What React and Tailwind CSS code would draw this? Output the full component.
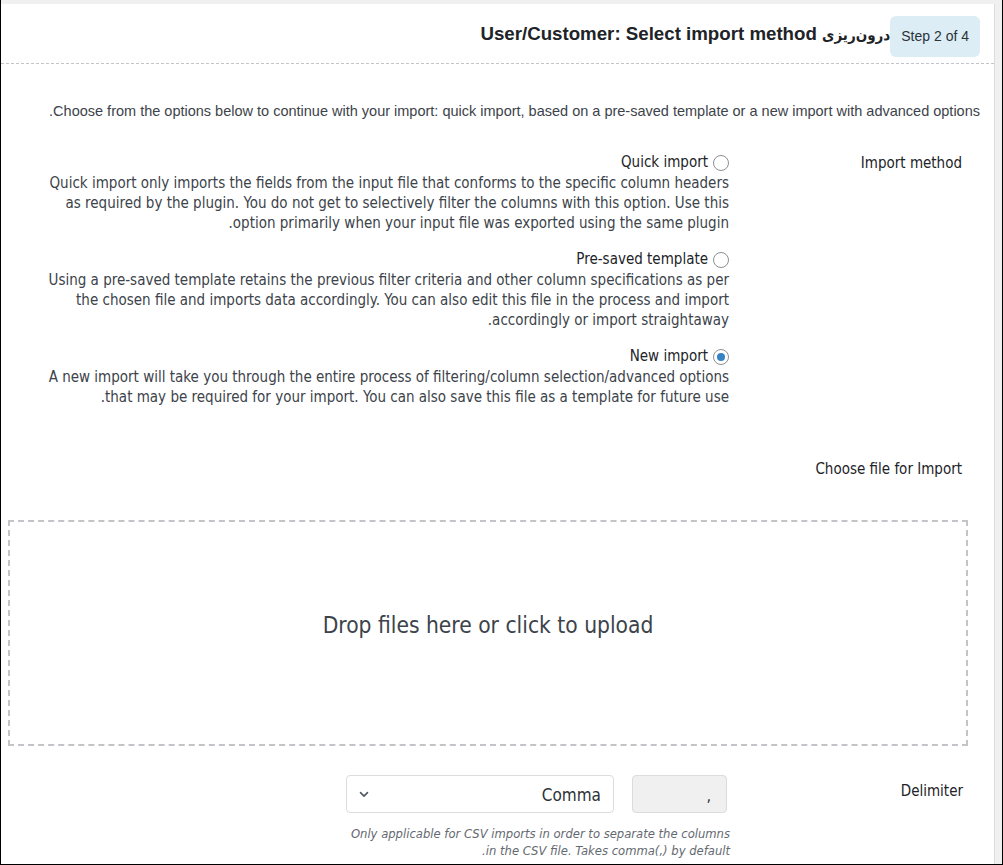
import React from "react";

function Radio({ checked }) {
  return (
    <span className="inline-flex w-[16px] h-[16px] rounded-full border border-[#8c8f94] bg-white items-center justify-center shrink-0">
      {checked ? <span className="w-[8px] h-[8px] rounded-full bg-[#3582c4]" /> : null}
    </span>
  );
}

function Option({ label, checked, lines, className }) {
  return (
    <div className={className}>
      <div className="flex items-center gap-[5px] h-[21px] text-[15px] text-[#1d2327]">
        <Radio checked={checked} />
        <span>{label}</span>
      </div>
      <div className="text-[15px] leading-[20px] text-[#3c434a]">
        {lines.map((l, i) => (
          <div key={i} className="whitespace-nowrap">{l}</div>
        ))}
      </div>
    </div>
  );
}

export default function App() {
  return (
    <div className="w-[1003px] h-[865px] bg-[#f0f0f1] border-l border-r border-b border-black pt-[4px] overflow-hidden flex">
      <div
        dir="rtl"
        className="w-[994px] h-full bg-white border-r border-[#dcdcde] font-['DejaVu_Sans_Condensed','DejaVu_Sans',sans-serif] text-[#3c434a]"
      >
        {/* header */}
        <div className="flex items-start h-[60px] border-b border-dashed border-[#c3c4c7] pr-[14px] pt-[12px]">
          <div className="h-[41px] px-[11px] rounded-[6px] bg-[#dcedf5] flex items-center text-[14px] text-[#2c3338] font-['Liberation_Sans_Narrow','Liberation_Sans',sans-serif]">
            Step 2 of 4
          </div>
          <div className="mt-[4px] text-[18.7px] font-bold text-[#1d2327] font-['Liberation_Sans_Narrow','Liberation_Sans','DejaVu_Sans',sans-serif] whitespace-nowrap">
            <span className="text-[15px] font-['DejaVu_Sans_Condensed','DejaVu_Sans',sans-serif]">درون‌ریزی</span> User/Customer: Select import method
          </div>
        </div>

        {/* intro */}
        <div className="mt-[38px] pr-[14px] text-[14.5px] leading-[18px] text-[#3c434a] whitespace-nowrap font-['Liberation_Sans_Narrow','Liberation_Sans',sans-serif]">
          Choose from the options below to continue with your import: quick import, based on a pre-saved template or a new import with advanced options.
        </div>

        {/* import method row */}
        <div className="flex mt-[32px] pr-[32px]">
          <div className="w-[233px] shrink-0 pt-[1px] text-[15px] leading-[21px] text-[#1d2327]">Import method</div>
          <div className="w-[690px] shrink-0">
            <Option
              label="Quick import"
              lines={[
                "Quick import only imports the fields from the input file that conforms to the specific column headers",
                "as required by the plugin. You do not get to selectively filter the columns with this option. Use this",
                "option primarily when your input file was exported using the same plugin.",
              ]}
            />
            <Option
              className="mt-[16px]"
              label="Pre-saved template"
              lines={[
                "Using a pre-saved template retains the previous filter criteria and other column specifications as per",
                "the chosen file and imports data accordingly. You can also edit this file in the process and import",
                "accordingly or import straightaway.",
              ]}
            />
            <Option
              className="mt-[16px]"
              checked
              label="New import"
              lines={[
                "A new import will take you through the entire process of filtering/column selection/advanced options",
                "that may be required for your import. You can also save this file as a template for future use.",
              ]}
            />
          </div>
        </div>

        {/* choose file */}
        <div className="mt-[52px] pr-[32px] text-[15px] leading-[20px] text-[#1d2327]">Choose file for Import</div>

        <div className="mt-[41px] mr-[26px] w-[960px] h-[226px] border-2 border-dashed border-[#c3c4c7] flex items-center justify-center pb-[15px]">
          <span className="text-[22.6px] text-[#3c434a]">Drop files here or click to upload</span>
        </div>

        {/* delimiter */}
        <div className="flex mt-[29px] pr-[31px]">
          <div className="w-[236px] shrink-0 pt-[6px] text-[15px] leading-[21px] text-[#1d2327]">Delimiter</div>
          <div className="shrink-0">
            <div className="flex gap-[18px]">
              <div className="w-[95px] h-[38px] rounded-[4px] border border-[#dcdcde] bg-[#f0f0f1] flex items-center pr-[15px] pt-[4px] text-[16px] text-[#2c3338]">,</div>
              <div className="w-[268px] h-[38px] rounded-[4px] border border-[#dcdcde] bg-white flex items-center justify-between pr-[12px] pl-[10px] pt-[3px] text-[17px] text-[#2c3338]">
                <span>Comma</span>
                <svg className="-mt-[3px]" width="14" height="14" viewBox="0 0 20 20" fill="none" stroke="#50575e" strokeWidth="2.2" strokeLinecap="round" strokeLinejoin="round">
                  <path d="M5 8l5 5 5-5" />
                </svg>
              </div>
            </div>
            <div className="mt-[12px] mr-[-3px] text-[12.9px] leading-[17px] italic text-[#646970]">
              <div className="whitespace-nowrap">Only applicable for CSV imports in order to separate the columns</div>
              <div className="whitespace-nowrap">in the CSV file. Takes comma(,) by default.</div>
            </div>
          </div>
        </div>
      </div>
    </div>
  );
}
